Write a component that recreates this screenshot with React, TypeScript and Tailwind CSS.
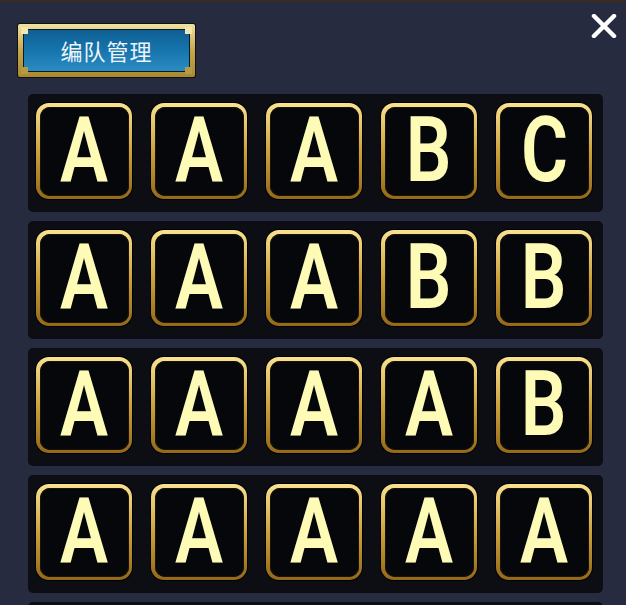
import React from "react";

const rows = [
  ["A", "A", "A", "B", "C"],
  ["A", "A", "A", "B", "B"],
  ["A", "A", "A", "A", "B"],
  ["A", "A", "A", "A", "A"],
];

function Tile({ letter }: { letter: string }) {
  return (
    <div className="h-[96px] w-[96px] shrink-0 rounded-[13px] bg-gradient-to-b from-[#f9e291] via-[#cda23d] to-[#936818] p-[3.5px] shadow-[0_0_0_1px_#000]">
      <div className="flex h-full w-full items-center justify-center rounded-[10px] bg-[#05070b] shadow-[inset_0_0_0_1px_#1a1408]">
        <span
          className="inline-block scale-x-[0.8] text-[90px] font-semibold leading-none text-[#fdfbb6]"
          style={{ fontFamily: "Roboto, 'DejaVu Sans', sans-serif" }}
        >
          {letter}
        </span>
      </div>
    </div>
  );
}

function TeamButton() {
  return (
    <div className="relative h-[53px] w-[177px] rounded-[2px] bg-gradient-to-b from-[#efe2a0] via-[#c9a64c] to-[#a88a30] p-[5px] shadow-[0_0_0_1px_#111]">
      <div className="relative flex h-full w-full items-center justify-center border border-[#0c1a26] bg-gradient-to-b from-[#0f5f93] via-[#1675ad] to-[#2a8cc2]">
        <span
          className="text-[22px] tracking-[1px] text-[#eef4fa]"
          style={{ fontFamily: "'Noto Sans CJK SC', sans-serif" }}
        >
          编队管理
        </span>
      </div>
      <div className="absolute left-[3px] top-[3px] h-[7px] w-[7px] bg-[#f3e7b0]" />
      <div className="absolute right-[3px] top-[3px] h-[7px] w-[7px] bg-[#f3e7b0]" />
      <div className="absolute bottom-[3px] left-[3px] h-[7px] w-[7px] bg-[#b89a44]" />
      <div className="absolute bottom-[3px] right-[3px] h-[7px] w-[7px] bg-[#b89a44]" />
    </div>
  );
}

export default function App() {
  return (
    <div className="h-[605px] w-[626px] overflow-hidden border-t-2 border-[#3b2c22] bg-[#262b3f]">
      <div className="flex items-start justify-between pl-[18px] pr-[9px] pt-[22px]">
        <TeamButton />
        <svg width="26" height="24" viewBox="0 0 26 24" className="-mt-[10px]">
          <path d="M3 2 L23 22 M23 2 L3 22" stroke="#ffffff" strokeWidth="4.5" strokeLinecap="round" />
        </svg>
      </div>
      <div className="ml-[28px] mr-[23px] mt-[17px] flex flex-col gap-[9px]">
        {rows.map((row, i) => (
          <div key={i} className="flex h-[118px] gap-[19px] rounded-[5px] bg-[#0c0e14] pl-[8px] pt-[9px]">
            {row.map((l, j) => (
              <Tile key={j} letter={l} />
            ))}
          </div>
        ))}
        <div className="h-[118px] rounded-[5px] bg-[#0c0e14]" />
      </div>
    </div>
  );
}
